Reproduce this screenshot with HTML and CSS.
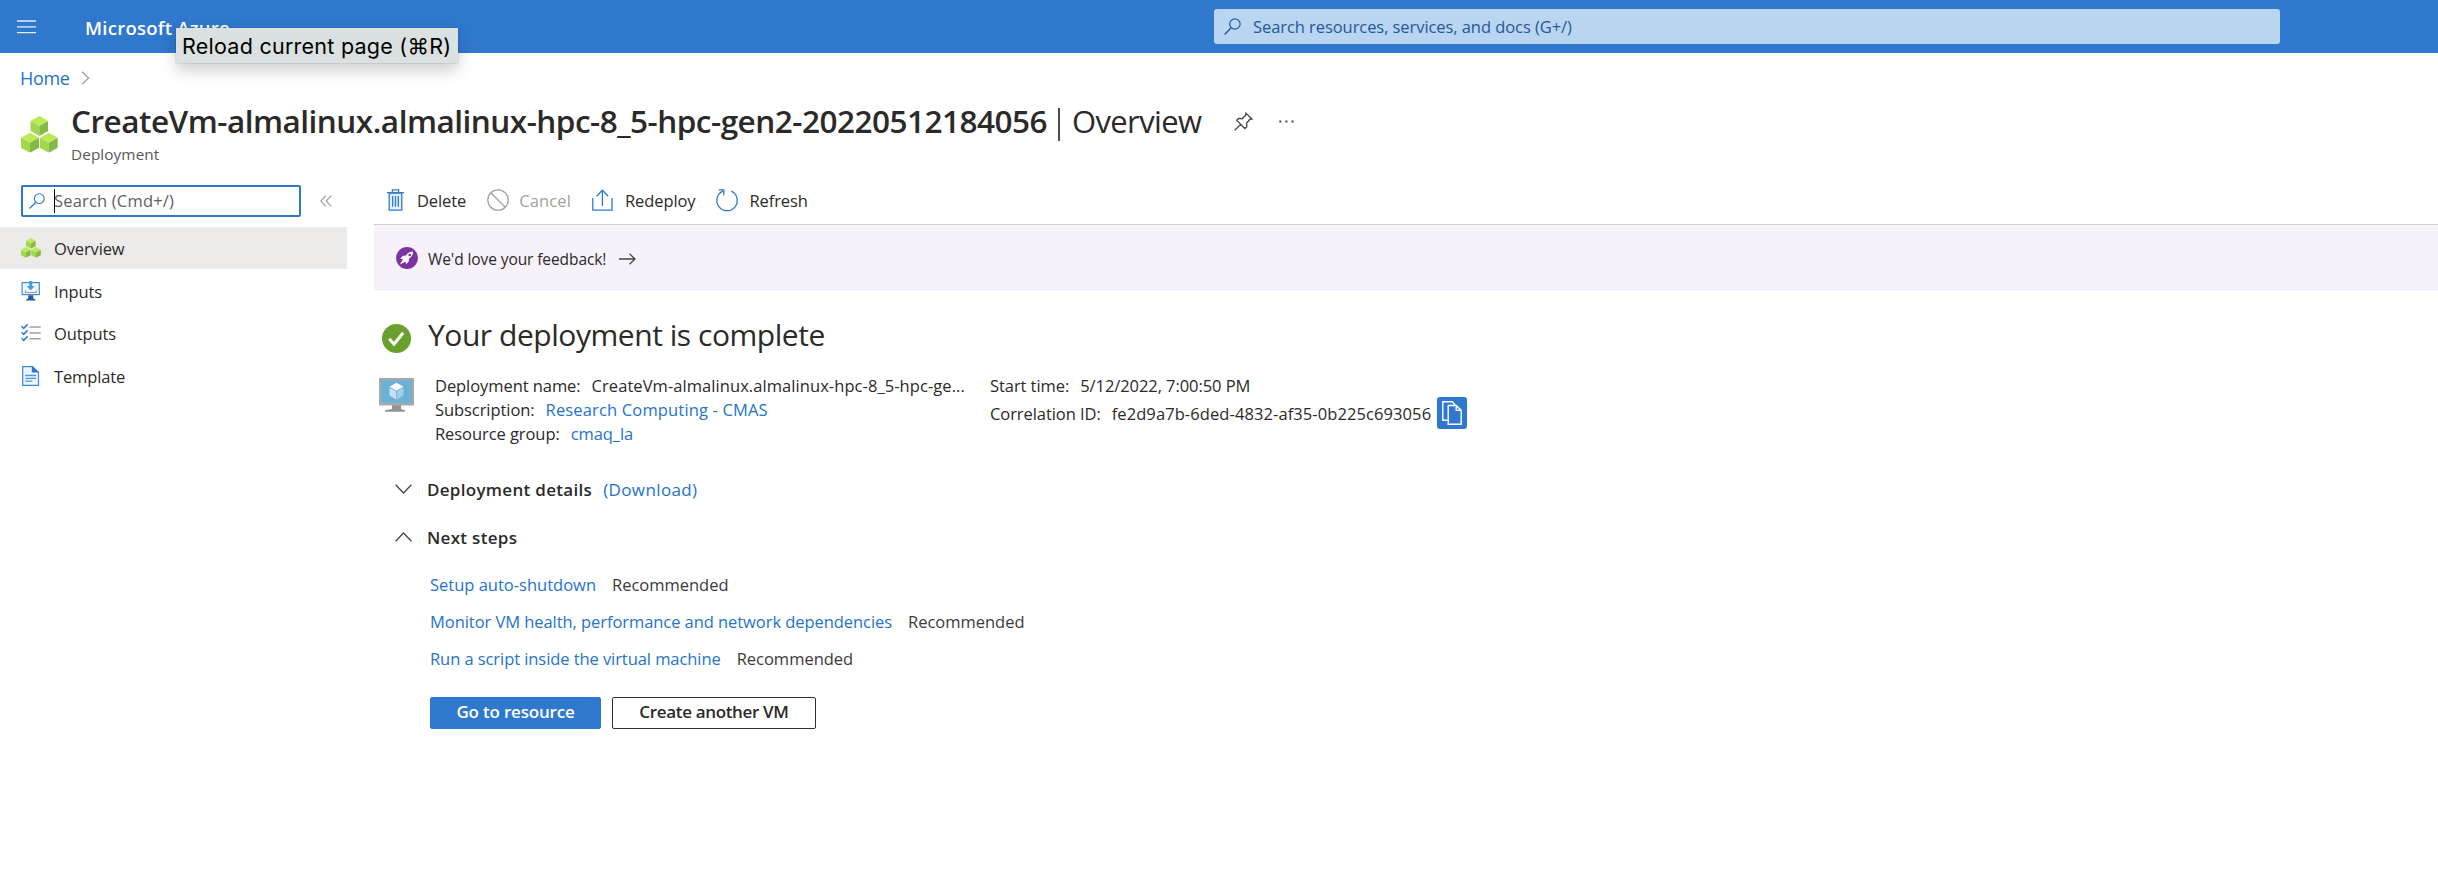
FILE: index.html
```html
<!DOCTYPE html>
<html lang="en">
<head>
<meta charset="utf-8">
<title>Deployment overview - Microsoft Azure</title>
<link rel="stylesheet" href="styles.css">
</head>
<body>
<svg class="defs" aria-hidden="true">
  <symbol id="cube" viewBox="0 0 18 20">
    <path d="M9 0l9 5-9 5-9-5z" fill="#bcea55"/>
    <path d="M0 5l9 5v10l-9-5z" fill="#a0d84c"/>
    <path d="M18 5l-9 5v10l9-5z" fill="#84b947"/>
  </symbol>
  <symbol id="cubes" viewBox="0 0 37 37">
    <use href="#cube" x="9.3" y="0" width="18" height="20"/>
    <use href="#cube" x="0" y="16.7" width="18" height="20"/>
    <use href="#cube" x="18.8" y="16.7" width="18" height="20"/>
  </symbol>
  <symbol id="magnifier" viewBox="0 0 17 17">
    <circle cx="10.9" cy="6" r="5.2" fill="none" stroke="currentColor" stroke-width="1.2"/>
    <path d="M7.2 9.8L.6 16.4" fill="none" stroke="currentColor" stroke-width="1.4"/>
  </symbol>
</svg>

<header class="topbar">
  <svg class="menu-icon" viewBox="0 0 19 14"><path d="M0 1h19M0 6.8h19M0 12.6h19"/></svg>
  <span class="brand">Microsoft Azure</span>
  <div class="global-search">
    <svg class="global-search-icon"><use href="#magnifier"/></svg>
    <span>Search resources, services, and docs (G+/)</span>
  </div>
  <div class="tooltip">Reload current page (⌘R)</div>
</header>

<nav class="breadcrumb">
  <a class="home">Home</a>
  <svg class="crumb-arrow" viewBox="0 0 9 14"><path d="M1 .7L7.6 7 1 13.3"/></svg>
</nav>

<section class="title-block">
  <svg class="title-icon"><use href="#cubes"/></svg>
  <div>
    <div class="title-row">
      <h1 class="title">CreateVm-almalinux.almalinux-hpc-8_5-hpc-gen2-20220512184056</h1>
      <span class="divider"></span>
      <span class="title-view">Overview</span>
      <svg class="pin" viewBox="0 0 20 20"><path d="M.7 19.3L7 13M12.6 1.2l6.2 6.2-2 .2-3.6 4.2.3 3.6-2.1 2-8.6-8.6 2-2 3.7.3 3.7-3.6z"/></svg>
      <svg class="more" viewBox="0 0 15 3"><path d="M.3.5h2v2h-2zM6.4.5h2v2h-2zM12.5.5h2v2h-2z"/></svg>
    </div>
    <div class="subtitle">Deployment</div>
  </div>
</section>

<div class="body">
  <aside class="sidebar">
    <div class="side-tools">
      <div class="side-search">
        <svg class="side-search-icon"><use href="#magnifier"/></svg>
        <span class="caret"></span>
        <span class="placeholder">Search (Cmd+/)</span>
      </div>
      <svg class="collapse" viewBox="0 0 12 12"><path d="M5.7.7L.9 6l4.8 5.3M11.2.7L6.4 6l4.8 5.3"/></svg>
    </div>
    <div class="menu">
      <div class="menu-item selected">
        <svg class="menu-item-icon"><use href="#cubes"/></svg><span>Overview</span>
      </div>
      <div class="menu-item">
        <svg class="menu-item-icon" viewBox="0 0 20 20">
          <rect x="1.1" y="1.6" width="17.2" height="12" fill="#f2f8fd" stroke="#3c8bdc" stroke-width="1.2"/>
          <path d="M4.6 9.3v2.2h10.6V9.3" fill="none" stroke="#999" stroke-width="1.1"/>
          <path d="M8.2 0h3v5h2.6l-4.1 4.4L5.6 5h2.6z" fill="#41a0e6"/>
          <path d="M7.3 14.2h5v3l2.3 1.6v.8H5v-.8l2.3-1.6z" fill="#2459a9"/>
        </svg><span>Inputs</span>
      </div>
      <div class="menu-item">
        <svg class="menu-item-icon" viewBox="0 0 20 20">
          <path d="M8.5 4h11.2M8.5 10h11.2M8.5 15.8h11.2" stroke="#a0a0a0" stroke-width="1.5"/>
          <path d="M.6 3.3l2 2 4-3.9M.6 9.3l2 2 4-3.9M.6 15.3l2 2 4-3.9" fill="none" stroke="#2f7fd8" stroke-width="1.6"/>
        </svg><span>Outputs</span>
      </div>
      <div class="menu-item">
        <svg class="menu-item-icon" viewBox="0 0 20 20">
          <path d="M1.7.6h9.8l6 5.600v13.200H1.700z" fill="#eef6fd" stroke="#3c8bdc" stroke-width="1.2"/>
          <path d="M10.800 0l7.300 6.600h-7.300z" fill="#2f74cb"/>
          <path d="M4.300 9.500h10.800M4.300 12.300h10.800M4.300 15.100h7" stroke="#4c93de" stroke-width="1.3"/>
        </svg><span>Template</span>
      </div>
    </div>
  </aside>

  <main class="content">
    <div class="toolbar">
      <span class="command">
        <svg class="trash" viewBox="0 0 17 22">
          <path d="M2.200 4h12.600v17.200H2.200z" fill="#e6f1fb" stroke="#2f7bd0" stroke-width="1.3"/>
          <path d="M0 3.600h17M5.400 3V.9h6.200V3M5.700 7v10.800M8.500 7v10.800M11.300 7v10.800" fill="none" stroke="#2f7bd0" stroke-width="1.3"/>
        </svg><span>Delete</span>
      </span>
      <span class="command disabled">
        <svg class="cancel" viewBox="0 0 22 22"><circle cx="11" cy="11" r="10.2"/><path d="M3.800 3.800l14.400 14.400"/></svg><span>Cancel</span>
      </span>
      <span class="command">
        <svg class="redeploy" viewBox="0 0 21 22"><path d="M.8 9v12.200h19.200V9M10.400 17V1.300M4.600 7.200l5.800-5.900 5.800 5.900"/></svg><span>Redeploy</span>
      </span>
      <span class="command">
        <svg class="refresh" viewBox="0 0 22 22"><path d="M15.300 2.200A10.200 10.200 0 1 1 6.800 2.200M2.800.9h5v5.300"/></svg><span>Refresh</span>
      </span>
    </div>

    <div class="feedback">
      <svg class="rocket" viewBox="0 0 22 22">
        <circle cx="11" cy="11" r="10.9" fill="#7b33a1"/>
        <path d="M17 4.500c-3 .1-5.300 1.500-7.200 4L6.600 9l-2.400 2.700 2.900.2L4 17.500l5.700-3.100.3 2.900 2.600-2.500.5-3.200c2.600-2 3.900-4.200 3.900-7.100z" fill="#fff"/>
        <circle cx="13.7" cy="8" r="1.3" fill="#7b33a1"/>
      </svg>
      <span>We'd love your feedback!</span>
      <svg class="arrow" viewBox="0 0 17 12"><path d="M0 6h16M10.600.8L16 6l-5.400 5.200"/></svg>
    </div>

    <div class="status">
      <svg class="status-icon" viewBox="0 0 29 29"><circle cx="14.5" cy="14.5" r="14.5" fill="#6aa02d"/><path d="M7.200 14.800l4.800 5.400 9.200-11.400" fill="none" stroke="#fff" stroke-width="3"/></svg>
      <h2 class="status-title">Your deployment is complete</h2>
    </div>

    <div class="summary">
      <svg class="vm" viewBox="0 0 35 34">
        <path d="M13 27h9v4l4 1.200v1.600H6v-1.600L13 31z" fill="#939393"/>
        <rect width="35" height="27.5" rx="1" fill="#a6a8aa"/>
        <rect x="2.3" y="2.3" width="30.4" height="22.6" fill="#6bb1d6"/>
        <path d="M17.500 4.800l7 4-7 4-7-4z" fill="#fff"/>
        <path d="M10.500 9.800l6.600 3.700v8l-6.600-3.900z" fill="#c4e2f2"/>
        <path d="M24.500 9.800l-6.600 3.700v8l6.600-3.900z" fill="#a1d0e8"/>
      </svg>
      <dl class="facts">
        <div class="fact"><dt>Deployment name:</dt><dd class="fact-name">CreateVm-almalinux.almalinux-hpc-8_5-hpc-ge...</dd></div>
        <div class="fact"><dt>Subscription:</dt><dd class="link sub">Research Computing - CMAS</dd></div>
        <div class="fact"><dt>Resource group:</dt><dd class="link">cmaq_la</dd></div>
      </dl>
      <dl class="facts">
        <div class="fact start"><dt>Start time:</dt><dd>5/12/2022, 7:00:50 PM</dd></div>
        <div class="fact correlation"><dt>Correlation ID:</dt><dd class="fact-id">fe2d9a7b-6ded-4832-af35-0b225c693056</dd>
          <span class="copy"><svg class="copy-icon" viewBox="0 0 20 24"><path d="M6 19.200H.8V.8h9.600l3 3.500M6.200 4.500h8l5 4.900v13.800h-13zM14.200 4.500v4.900h5"/></svg></span>
        </div>
      </dl>
    </div>

    <div class="section-row details">
      <svg class="chevron" viewBox="0 0 17 10"><path d="M.6.7l7.900 8.300L16.400.7"/></svg>
      <h3 class="section-title">Deployment details</h3>
      <a class="link download">(Download)</a>
    </div>
    <div class="section-row next">
      <svg class="chevron" viewBox="0 0 17 10"><path d="M.6 9.300L8.500 1l7.900 8.300"/></svg>
      <h3 class="section-title">Next steps</h3>
    </div>

    <div class="steps">
      <div class="step"><a class="link">Setup auto-shutdown</a><span class="note">Recommended</span></div>
      <div class="step"><a class="link monitor">Monitor VM health, performance and network dependencies</a><span class="note">Recommended</span></div>
      <div class="step"><a class="link run">Run a script inside the virtual machine</a><span class="note">Recommended</span></div>
    </div>
    <div class="actions">
      <span class="button primary">Go to resource</span>
      <span class="button secondary">Create another VM</span>
    </div>
  </main>
</div>
</body>
</html>
```

FILE: styles.css
```css
* { box-sizing: border-box; }
body {
  margin: 0;
  min-height: 888px;
  background: #fff;
  color: #2b2a29;
  font: 16.5px/24px "Open Sans", "Noto Sans", sans-serif;
}
svg { display: block; flex: none; fill: none; overflow: visible; }
h1, h2, h3, dl, dd { margin: 0; }
.defs { position: absolute; width: 0; height: 0; }
.link, .home { color: #2473ce; }

/* Top bar */
.topbar {
  position: relative;
  display: flex;
  align-items: center;
  height: 53px;
  padding: 0 158px 0 17px;
  background: #2f78ce;
  white-space: nowrap;
}
.menu-icon { width: 19px; height: 14px; stroke: #e8f1fa; stroke-width: 1.3; }
.brand {
  width: 1128px;
  margin: 2px 0 0 49px;
  color: #fff;
  font-size: 18.5px;
  font-weight: 600;
  letter-spacing: .25px;
}
.global-search {
  flex: 1;
  display: flex;
  align-items: center;
  height: 35px;
  margin-left: 1px;
  padding-left: 10px;
  gap: 12px;
  border-radius: 3px;
  background: #b9d5f0;
  color: #24589a;
  letter-spacing: -.067px;
}
.global-search-icon { width: 17px; height: 17px; }
.tooltip {
  position: absolute;
  left: 176px;
  top: 28px;
  width: 282px;
  height: 35px;
  padding: 1px 0 0 6px;
  background: #dae1e0;
  box-shadow: 0 0 1px rgba(0, 0, 0, .4), 0 7px 16px rgba(0, 0, 0, .2);
  color: #000;
  font: 21.5px/35px Inter, sans-serif;
  letter-spacing: .25px;
}

/* Breadcrumb and title */
.breadcrumb { display: flex; align-items: center; gap: 11px; height: 47px; padding: 3px 0 0 20px; }
.home { font-size: 18px; letter-spacing: -.3px; }
.crumb-arrow { width: 9px; height: 14px; stroke: #a19f9d; stroke-width: 1.3; }
.title-block { display: flex; gap: 13px; height: 64px; padding-left: 21px; white-space: nowrap; }
.title-icon { width: 37px; height: 37px; margin-top: 16px; }
.title-row { display: flex; align-items: center; height: 42px; }
.title { width: 987px; font-size: 31.5px; font-weight: 600; line-height: 42px; letter-spacing: -.5px; }
.divider { width: 2px; height: 33px; margin-top: 6px; background: #4a4948; }
.title-view { width: 162px; margin-left: 12px; font-size: 31px; line-height: 42px; letter-spacing: -.627px; }
.pin { width: 19px; height: 19px; stroke: #484644; stroke-width: 1.4; }
.more { width: 15px; height: 3px; margin-left: 26px; fill: #484644; }
.subtitle { margin-top: 2px; color: #5a5856; font-size: 15.3px; line-height: 20px; letter-spacing: .1px; }

/* Sidebar */
.body { display: flex; }
.sidebar { width: 347px; padding-top: 21px; }
.side-tools { display: flex; align-items: center; gap: 19px; padding-left: 21px; }
.side-search {
  display: flex;
  align-items: center;
  width: 280px;
  height: 32px;
  padding-left: 6px;
  border: 2px solid #2f78ce;
  border-radius: 2px;
}
.side-search-icon { width: 16px; height: 16px; color: #2f7bd2; }
.caret { width: 1px; height: 24px; margin-left: 9px; background: #000; }
.placeholder { margin-left: -1px; color: #605e5c; letter-spacing: .181px; }
.collapse { width: 12px; height: 12px; stroke: #979593; stroke-width: 1.1; }
.menu { display: grid; gap: .6px; margin-top: 10px; }
.menu-item { display: flex; align-items: center; gap: 13px; height: 42px; padding-left: 21px; letter-spacing: -.13px; }
.menu-item span { padding-top: 2px; }
.menu-item-icon { width: 20px; height: 20px; }
.selected { background: #edebe9; }

/* Toolbar */
.content { flex: 1; margin-left: 27px; }
.toolbar { display: flex; height: 61px; padding: 13px 0 0 13px; border-bottom: 1px solid #d2d0ce; }
.command { display: flex; align-items: center; height: 46px; letter-spacing: -.1px; }
.command span { padding-top: 1px; }
.command + .command { margin-left: 21px; }
.disabled { color: #a19f9d; letter-spacing: .13px; }
.trash { width: 17px; height: 22px; margin-right: 13px; }
.cancel { width: 22px; height: 22px; margin-right: 10px; stroke: #a6a4a2; stroke-width: 1.3; }
.redeploy { width: 21px; height: 22px; margin-right: 12px; stroke: #2f7bd0; stroke-width: 1.3; }
.refresh { width: 22px; height: 22px; margin-right: 11px; stroke: #2f7bd0; stroke-width: 1.3; }
.feedback {
  display: flex;
  align-items: center;
  height: 66px;
  padding: 1px 0 0 22px;
  border-radius: 0 0 0 3px;
  background: #f7f2fa;
  font-size: 15.5px;
  letter-spacing: -.09px;
}
.rocket { width: 22px; height: 22px; margin: -2px 10px 0 0; }
.arrow { width: 17px; height: 12px; margin-left: 13px; stroke: #484644; stroke-width: 1.3; }

/* Status */
.status { display: flex; height: 60px; padding: 23px 0 0 8px; }
.status-icon { width: 29px; height: 29px; margin-top: 10px; }
.status-title { margin: 1px 0 0 17px; font-size: 30px; font-weight: 400; line-height: 40px; letter-spacing: -.454px; }
.summary { display: flex; height: 103px; padding: 23px 0 0 5px; white-space: nowrap; }
.vm { width: 35px; height: 34px; margin: 4px 21px 0 0; }
.facts { width: 555px; }
.fact { display: flex; gap: 11px; height: 24px; align-items: center; letter-spacing: -.07px; }
.fact-name, .fact-id { letter-spacing: .066px; }
.sub { letter-spacing: .155px; }
.start { height: 23px; }
.correlation { height: 32px; }
.correlation dt, .correlation dd { padding-top: 1px; }
.copy { display: flex; align-items: center; justify-content: center; width: 30px; height: 32px; margin-left: -5px; border-radius: 3px; background: #2f78ce; }
.copy-icon { width: 20px; height: 24px; stroke: #fff; stroke-width: 1.4; }
.fact-id { letter-spacing: .09px; }

/* Sections */
.section-row { display: flex; align-items: center; height: 24px; padding-left: 21px; font-size: 17px; }
.details { margin-top: 23px; }
.next { margin-top: 24px; }
.chevron { width: 17px; height: 10px; margin-right: 15px; stroke: #484644; stroke-width: 1.3; }
.section-title { padding-top: 1px; font-size: 17px; font-weight: 600; letter-spacing: .3px; }
.download { margin-left: 11px; padding-top: 1px; letter-spacing: .384px; }
.steps { margin-top: 17px; padding-left: 56px; }
.step { display: flex; align-items: center; gap: 16px; height: 37px; }
.note { color: #3b3a39; letter-spacing: -.02px; }
.monitor { letter-spacing: -.06px; }
.run { letter-spacing: -.07px; }
.actions { display: flex; gap: 11px; margin-top: 20px; padding-left: 56px; }
.button { height: 32px; border-radius: 2px; font-size: 17px; font-weight: 600; line-height: 28px; text-align: center; }
.primary { width: 171px; border: 1px solid #2f78ce; background: #2f78ce; color: #fff; letter-spacing: -.193px; }
.secondary { width: 204px; border: 1px solid #323130; letter-spacing: -.338px; }
```
